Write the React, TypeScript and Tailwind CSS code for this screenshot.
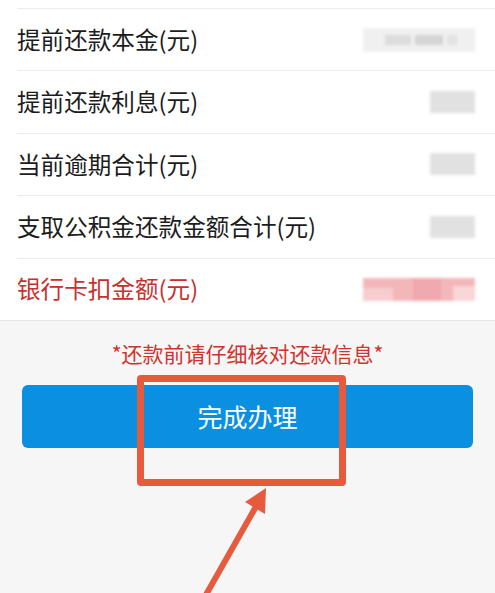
import type { ReactNode } from 'react';

const font = { fontFamily: '"Noto Sans CJK SC", "Noto Sans", sans-serif' };

function Row({ label, value, red = false }: { label: string; value: ReactNode; red?: boolean }) {
  return (
    <div className="flex h-[62.4px] items-center justify-between border-t border-[#ececec] pr-[20px]">
      <span className={`text-[23.6px] leading-none ${red ? 'text-[#c8302e]' : 'text-[#1c1c1c]'}`}>{label}</span>
      {value}
    </div>
  );
}

function WideBlur() {
  return (
    <div className="flex h-[24px] w-[112px] items-center gap-[4px] bg-[#f0f0f0] pl-[22px] blur-[1.5px]">
      <div className="h-[10px] w-[26px] bg-[#dcdcdc]" />
      <div className="h-[10px] w-[28px] bg-[#d4d4d4]" />
      <div className="h-[10px] w-[10px] bg-[#e2e2e2]" />
    </div>
  );
}

function SmallBlur() {
  return <div className="h-[22px] w-[45px] bg-[#e1e1e1] blur-[1.5px]" />;
}

function PinkBlur() {
  return (
    <div className="flex h-[23px] w-[112px] bg-[#f3b7ba] blur-[1.5px]">
      <div className="mt-[10px] h-[13px] w-[30px] bg-[#f6cdd0]" />
      <div className="ml-[20px] h-[23px] w-[28px] bg-[#f0a9ae]" />
      <div className="ml-[12px] mt-[8px] h-[15px] w-[22px] bg-[#f9d6d8]" />
    </div>
  );
}

export default function App() {
  return (
    <div className="relative h-[593px] w-full overflow-hidden bg-[#f6f6f6]" style={font}>
      <div className="bg-white pt-[8px]">
        <div className="pl-[17px]">
          <Row label="提前还款本金(元)" value={<WideBlur />} />
          <Row label="提前还款利息(元)" value={<SmallBlur />} />
          <Row label="当前逾期合计(元)" value={<SmallBlur />} />
          <Row label="支取公积金还款金额合计(元)" value={<SmallBlur />} />
          <Row label="银行卡扣金额(元)" value={<PinkBlur />} red />
        </div>
      </div>
      <div className="border-t border-[#e6e6e6] px-[22px]">
        <p className="mt-[18px] text-center text-[21px] leading-[28px] text-[#d2322d]">*还款前请仔细核对还款信息*</p>
        <button className="mt-[18px] flex h-[63px] w-full items-center justify-center rounded-[6px] bg-[#0b8fe1] text-[25px] text-white">
          完成办理
        </button>
      </div>

      {/* annotation overlay */}
      <div className="pointer-events-none absolute left-[137px] top-[375px] h-[111px] w-[209px] rounded-[4px] border-[7px] border-[#e65b3e]" />
      <svg className="pointer-events-none absolute left-0 top-0" width="495" height="593" viewBox="0 0 495 593">
        <line x1="203" y1="600" x2="258" y2="503" stroke="#e65b3e" strokeWidth="6" />
        <polygon points="266,488 245,502 265,514" fill="#e65b3e" />
      </svg>
    </div>
  );
}
